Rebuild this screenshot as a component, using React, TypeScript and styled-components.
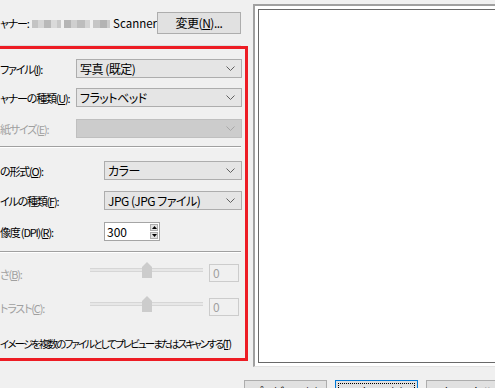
import React from "react";
import styled, { createGlobalStyle, css } from "styled-components";

const GlobalStyle = createGlobalStyle`
  html, body {
    margin: 0;
    padding: 0;
    background: #f0f0f0;
  }
  body {
    font-family: "Noto Sans CJK JP", "Noto Sans", sans-serif;
    font-size: 12px;
    color: #000;
  }
`;

const uiText = css`
  font-family: "Noto Sans CJK JP", "Noto Sans", sans-serif;
  font-size: 12px;
  line-height: 16px;
  font-feature-settings: "palt";
  white-space: nowrap;
`;

const narrowText = css`
  ${uiText}
  font-size: 11px;
  letter-spacing: -1.2px;
`;

const Root = styled.div`
  width: 495px;
  height: 388px;
  overflow: hidden;
  background: #f0f0f0;
  display: flex;
  flex-direction: column;
`;

const Main = styled.div`
  display: flex;
  height: 367px;
  flex-shrink: 0;
`;

const Left = styled.div`
  width: 248px;
  flex-shrink: 0;
  display: flex;
  flex-direction: column;
`;

const ScannerRow = styled.div`
  ${uiText}
  width: 241px;
  height: 45px;
  box-sizing: border-box;
  padding-top: 12px;
  display: flex;
  align-items: flex-start;
`;

const ScannerLabel = styled.span`
  ${narrowText}
  height: 22px;
  display: flex;
  align-items: center;
`;

const ScannerName = styled.span`
  height: 22px;
  font-size: 11.5px;
  display: flex;
  align-items: center;
`;

const Blurred = styled.span`
  width: 80px;
  height: 8px;
  margin: 8px 3px 0 3px;
  background: linear-gradient(
    to right,
    #c4c4c4 0 6px,
    #d6d6d6 6px 12px,
    #b9b9b9 12px 19px,
    #dadada 19px 25px,
    #c9c9c9 25px 29px,
    #f0f0f0 29px 32px,
    #b5b5b5 32px 39px,
    #cfcfcf 39px 45px,
    #bdbdbd 45px 53px,
    #d4d4d4 53px 58px,
    #f0f0f0 58px 61px,
    #c6c6c6 61px 68px,
    #b3b3b3 68px 75px,
    #cccccc 75px 80px
  );
`;

const PushButton = styled.div<{ $default?: boolean }>`
  ${uiText}
  letter-spacing: -0.5px;
  position: relative;
  box-sizing: border-box;
  height: 22px;
  width: 84px;
  flex-shrink: 0;
  background: #e1e1e1;
  border: 1px solid ${(p) => (p.$default ? "#0078d7" : "#adadad")};
  display: flex;
  align-items: center;
  justify-content: center;
  ${(p) =>
    p.$default &&
    css`
      &::after {
        content: "";
        position: absolute;
        inset: 2px;
        border: 1px dotted #000;
      }
    `}
`;

const ChangeButton = styled(PushButton)`
  margin-left: auto;
`;

const TopLine = styled.div`
  width: 241px;
  height: 1px;
  background: #dcdcdc;
`;

const Group = styled.div`
  box-sizing: border-box;
  margin-left: -3px;
  width: 251px;
  height: 315px;
  border: 3px solid #ed1c24;
  padding-top: 10px;
  display: flex;
  flex-direction: column;
`;

const Row = styled.div<{ $top: number }>`
  display: flex;
  align-items: center;
  height: 19px;
  margin-top: ${(p) => p.$top}px;
`;

const Label = styled.span<{ $width: number; $disabled?: boolean }>`
  ${narrowText}
  width: ${(p) => p.$width}px;
  flex-shrink: 0;
  padding-top: 1px;
  color: ${(p) => (p.$disabled ? "#a0a0a0" : "#000")};
`;

const SelectBox = styled.div<{ $disabled?: boolean }>`
  ${uiText}
  letter-spacing: -0.5px;
  box-sizing: border-box;
  width: 166px;
  height: 19px;
  flex-shrink: 0;
  border: 1px solid ${(p) => (p.$disabled ? "#bfbfbf" : "#adadad")};
  background: ${(p) => (p.$disabled ? "#cccccc" : "#e5e5e5")};
  display: flex;
  align-items: center;
  justify-content: space-between;
  padding: 0 6px 0 3px;
`;

const WideSelect = styled(SelectBox)`
  width: 138px;
`;

const Separator = styled.div<{ $top: number }>`
  width: 241px;
  height: 1px;
  margin-top: ${(p) => p.$top}px;
  background: #a0a0a0;
  box-shadow: 0 1px 0 #ffffff;
`;

const Spin = styled.div`
  box-sizing: border-box;
  width: 56px;
  height: 19px;
  border: 1px solid #a5a5a5;
  background: #ffffff;
  display: flex;
  align-items: stretch;
`;

const SpinValue = styled.span`
  ${uiText}
  flex: 1;
  padding-left: 2px;
  display: flex;
  align-items: center;
`;

const SpinButtons = styled.div`
  width: 8px;
  margin: 1px 1px 1px 0;
  display: flex;
  flex-direction: column;
  gap: 1px;
`;

const SpinButton = styled.div`
  flex: 1;
  box-sizing: border-box;
  border: 1px solid #adadad;
  background: #e1e1e1;
  display: flex;
  align-items: center;
  justify-content: center;
`;

const SliderRow = styled.div<{ $top: number }>`
  display: flex;
  align-items: center;
  height: 18px;
  margin-top: ${(p) => p.$top}px;
`;

const Track = styled.div`
  width: 113px;
  height: 16px;
  align-self: flex-start;
  margin-top: -2px;
  flex-shrink: 0;
  display: flex;
  justify-content: center;
  background: linear-gradient(
    to bottom,
    transparent 6px,
    #d6d6d6 6px 7px,
    #e7e7e7 7px 9px,
    #d6d6d6 9px 10px,
    transparent 10px
  );
`;

const ValueBox = styled.div`
  ${uiText}
  box-sizing: border-box;
  width: 30px;
  height: 18px;
  margin-left: 6px;
  border: 1px solid #cccccc;
  color: #a0a0a0;
  padding-left: 3px;
  display: flex;
  align-items: center;
`;

const CheckText = styled.div`
  ${uiText}
  font-size: 10.5px;
  letter-spacing: -1.9px;
  margin-top: 20px;
`;

const Preview = styled.div`
  box-sizing: border-box;
  margin: 4px 0 0 5px;
  width: 260px;
  height: 363px;
  flex-shrink: 0;
  background: #ffffff;
  border-top: 2px solid #a0a0a0;
  border-left: 2px solid #a0a0a0;
  border-bottom: 1px solid #e3e3e3;
  padding: 3px 0 3px 3px;
  display: flex;
`;

const PreviewInner = styled.div`
  flex: 1;
  background: #ffffff;
  border: 1px solid #696969;
`;

const Footer = styled.div`
  display: flex;
  gap: 8px;
  padding-left: 244px;
  margin-top: 13px;
`;

const FooterButton = styled(PushButton)`
  width: 83px;
  height: 23px;
`;

const Chevron = ({ color }: { color: string }) => (
  <svg width="9" height="5" viewBox="0 0 9 5">
    <path d="M0.5 0.5 L4.5 4.5 L8.5 0.5" fill="none" stroke={color} strokeWidth="1" />
  </svg>
);

const Arrow = ({ up }: { up?: boolean }) => (
  <svg width="5" height="3" viewBox="0 0 5 3">
    <path d={up ? "M0 3 L2.5 0 L5 3 Z" : "M0 0 L2.5 3 L5 0 Z"} fill="#000" />
  </svg>
);

const Thumb = () => (
  <svg width="10" height="16" viewBox="0 0 10 16">
    <path d="M0 5 L5 0 L10 5 L10 16 L0 16 Z" fill="#cccccc" />
  </svg>
);

const Select = ({
  value,
  disabled,
  wide,
}: {
  value?: string;
  disabled?: boolean;
  wide?: boolean;
}) => {
  const Box = wide ? WideSelect : SelectBox;
  return (
    <Box $disabled={disabled}>
      <span>{value}</span>
      <Chevron color={disabled ? "#a8a8a8" : "#606060"} />
    </Box>
  );
};

export default function App() {
  return (
    <>
      <GlobalStyle />
      <Root>
        <Main>
          <Left>
            <ScannerRow>
              <ScannerLabel>ャナー:</ScannerLabel>
              <Blurred />
              <ScannerName>Scanner</ScannerName>
              <ChangeButton>
                変更(<u>N</u>)...
              </ChangeButton>
            </ScannerRow>
            <TopLine />
            <Group>
              <Row $top={0}>
                <Label $width={76}>
                  ファイル(<u>I</u>):
                </Label>
                <Select value="写真 (既定)" />
              </Row>
              <Row $top={10}>
                <Label $width={76}>
                  ャナーの種類(<u>U</u>):
                </Label>
                <Select value="フラットベッド" />
              </Row>
              <Row $top={12}>
                <Label $width={76} $disabled>
                  紙サイズ(<u>E</u>):
                </Label>
                <Select disabled />
              </Row>
              <Separator $top={8} />
              <Row $top={14}>
                <Label $width={104}>
                  の形式(<u>O</u>):
                </Label>
                <Select wide value="カラー" />
              </Row>
              <Row $top={11}>
                <Label $width={104}>
                  イルの種類(<u>F</u>):
                </Label>
                <Select wide value="JPG (JPG ファイル)" />
              </Row>
              <Row $top={12}>
                <Label $width={104}>
                  像度 (DPI)(<u>R</u>):
                </Label>
                <Spin>
                  <SpinValue>300</SpinValue>
                  <SpinButtons>
                    <SpinButton>
                      <Arrow up />
                    </SpinButton>
                    <SpinButton>
                      <Arrow />
                    </SpinButton>
                  </SpinButtons>
                </Spin>
              </Row>
              <Separator $top={10} />
              <SliderRow $top={12}>
                <Label $width={90} $disabled>
                  さ(<u>B</u>):
                </Label>
                <Track>
                  <Thumb />
                </Track>
                <ValueBox>0</ValueBox>
              </SliderRow>
              <SliderRow $top={16}>
                <Label $width={90} $disabled>
                  トラスト(<u>C</u>):
                </Label>
                <Track>
                  <Thumb />
                </Track>
                <ValueBox>0</ValueBox>
              </SliderRow>
              <CheckText>
                イメージを複数のファイルとしてプレビューまたはスキャンする(<u>T</u>)
              </CheckText>
            </Group>
          </Left>
          <Preview>
            <PreviewInner />
          </Preview>
        </Main>
        <Footer>
          <FooterButton>
            プレビュー(<u>P</u>)
          </FooterButton>
          <FooterButton $default>
            スキャン(<u>S</u>)
          </FooterButton>
          <FooterButton>キャンセル</FooterButton>
        </Footer>
      </Root>
    </>
  );
}
